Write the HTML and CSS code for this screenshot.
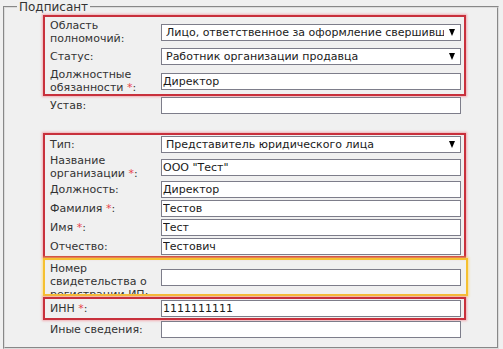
FILE: index.html
```html
<!DOCTYPE html>
<html lang="ru">

<head>
    <meta charset="UTF-8">
    <meta name="viewport" content="width=device-width, initial-scale=1.0">
    <title>Подписант</title>
    <link rel="stylesheet" href="styles.css">
</head>

<body>
    <fieldset class="signer">
        <legend>Подписант</legend>
        <div class="fields">

            <div class="group warn roomy">
                <div class="row">
                    <label for="scope">Область полномочий:</label>
                    <div class="pick">
                        <select id="scope" class="field">
                            <option>Лицо, ответственное за оформление свершившегося события</option>
                        </select>
                    </div>
                </div>
                <div class="row">
                    <label for="status">Статус:</label>
                    <div class="pick">
                        <select id="status" class="field">
                            <option>Работник организации продавца</option>
                        </select>
                    </div>
                </div>
                <div class="row">
                    <label for="duties">Должностные обязанности <span class="req">*</span>:</label>
                    <input type="text" id="duties" class="field" value="Директор">
                </div>
            </div>

            <div class="group plain">
                <div class="row">
                    <label for="charter">Устав:</label>
                    <input type="text" id="charter" class="field">
                </div>
            </div>

            <div class="group warn spaced">
                <div class="row">
                    <label for="kind">Тип:</label>
                    <div class="pick">
                        <select id="kind" class="field">
                            <option>Представитель юридического лица</option>
                        </select>
                    </div>
                </div>
                <div class="row">
                    <label for="org">Название организации <span class="req">*</span>:</label>
                    <input type="text" id="org" class="field" value='ООО "Тест"'>
                </div>
                <div class="row">
                    <label for="post">Должность:</label>
                    <input type="text" id="post" class="field" value="Директор">
                </div>
                <div class="row">
                    <label for="surname">Фамилия <span class="req">*</span>:</label>
                    <input type="text" id="surname" class="field" value="Тестов">
                </div>
                <div class="row">
                    <label for="name">Имя <span class="req">*</span>:</label>
                    <input type="text" id="name" class="field" value="Тест">
                </div>
                <div class="row">
                    <label for="patronymic">Отчество:</label>
                    <input type="text" id="patronymic" class="field" value="Тестович">
                </div>
            </div>

            <div class="group hint">
                <div class="row">
                    <label for="cert">Номер свидетельства о регистрации ИП:</label>
                    <input type="text" id="cert" class="field">
                </div>
            </div>

            <div class="group warn tight">
                <div class="row">
                    <label for="inn">ИНН <span class="req">*</span>:</label>
                    <input type="text" id="inn" class="field" value="1111111111">
                </div>
            </div>

            <div class="group plain">
                <div class="row">
                    <label for="other">Иные сведения:</label>
                    <input type="text" id="other" class="field">
                </div>
            </div>

        </div>
    </fieldset>
</body>

</html>
```

FILE: styles.css
```css
* {
    box-sizing: border-box;
}

body {
    margin: 0;
    background-color: #f0f0f0;
    font-family: "DejaVu Sans", Verdana, sans-serif;
    font-size: 11px;
    color: #333333;
}

.signer {
    margin: 0 4px 0 3px;
    padding: 1px 0 8px 12px;
    border: 2px groove #dcdcdc;
    min-width: 0;
}

.signer legend {
    padding: 0 2px;
    font-size: 12px;
    line-height: 14px;
    color: #333333;
}

.fields {
    padding: 0 31px 0 26px;
}

/* groups of rows, some of them outlined */
.group {
    display: flex;
    flex-direction: column;
    border: 2px solid transparent;
}

.group.plain {
    border-top: none;
    border-bottom: none;
}

.group.warn {
    border-color: #c8303c;
    box-shadow: 0 0 2px 1px rgba(240, 130, 140, 0.6);
}

.group.hint {
    height: 38px;
    overflow: hidden;
    margin-right: -2px;
    border-color: #f5c030;
    box-shadow: 0 0 2px 1px rgba(255, 215, 110, 0.7);
}

.group.roomy {
    padding-top: 2px;
    gap: 2px;
}

.group.spaced {
    margin-top: 18px;
}

.group.tight {
    margin-top: 1px;
}

.row {
    display: flex;
    align-items: center;
    min-height: 19px;
    padding-left: 5px;
}

.group.hint .row {
    height: 34px;
}

.group.hint label {
    align-self: flex-start;
    padding-top: 2px;
}

.row label {
    flex: none;
    width: 111px;
    padding-right: 4px;
    line-height: 13px;
}

.req {
    color: #e8434b;
}

.field {
    width: 300px;
    height: 17px;
    margin: 0;
    padding: 0 1px;
    border: 1px solid #7d7d8a;
    border-radius: 0;
    background-color: #ffffff;
    font-family: inherit;
    font-size: 11px;
    color: #1a1a1a;
    outline: none;
}

.pick {
    position: relative;
    width: 300px;
}

.pick .field {
    appearance: none;
    -webkit-appearance: none;
    padding: 0 16px 0 4px;
}

.pick::after {
    content: "";
    position: absolute;
    top: 5px;
    right: 6px;
    border-left: 3px solid transparent;
    border-right: 3px solid transparent;
    border-top: 7px solid #000000;
    pointer-events: none;
}
```
